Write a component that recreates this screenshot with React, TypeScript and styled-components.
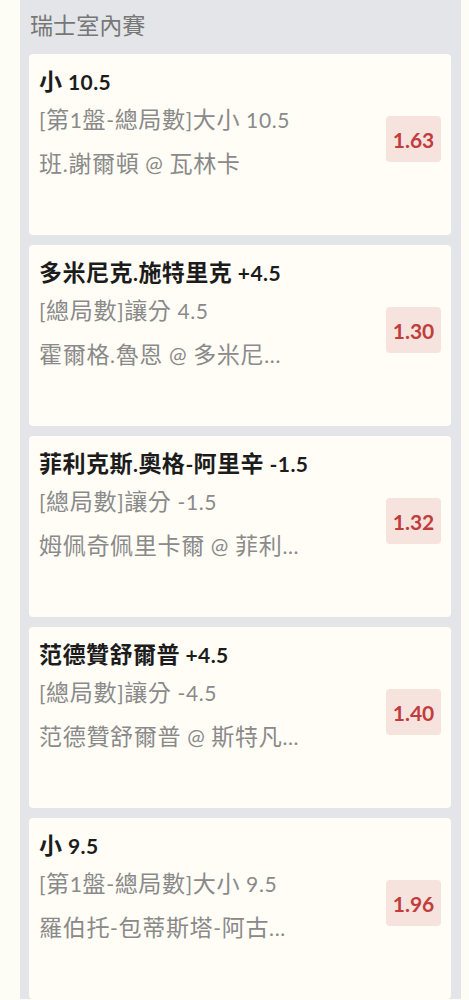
import styled, { createGlobalStyle } from "styled-components";

const GlobalStyle = createGlobalStyle`
  html, body {
    margin: 0;
    padding: 0;
    background: #fdfcf5;
  }
  body {
    font-family: Lato, "Noto Sans CJK TC", sans-serif;
  }
`;

const Panel = styled.section`
  margin: 0 8px 0 20px;
  background: #e4e5e9;
  padding: 0 10px 0 9px;
`;

const Header = styled.div`
  height: 54px;
  line-height: 52px;
  padding-left: 1px;
  font-size: 21px;
  color: #777;
`;

const List = styled.div`
  display: flex;
  flex-direction: column;
  gap: 10px;
`;

const Card = styled.div`
  box-sizing: border-box;
  height: 181px;
  display: flex;
  align-items: center;
  justify-content: space-between;
  padding: 13px 10px 24px 10px;
  background: #fffdf6;
  border-radius: 4px;
`;

const Info = styled.div`
  align-self: flex-start;
  display: flex;
  flex-direction: column;
  min-width: 0;
`;

const Title = styled.div`
  font-size: 21px;
  line-height: 30px;
  font-weight: 700;
  letter-spacing: 0.4px;
  color: #1c1c1c;
  white-space: nowrap;
`;

const Line = styled.div<{ $gap: number }>`
  margin-top: ${(p) => p.$gap}px;
  font-size: 21px;
  line-height: 30px;
  letter-spacing: 0.6px;
  color: #8a8a8a;
  white-space: nowrap;
`;

// Chinese runs are set a little larger than the Latin text around them
const Han = styled.span`
  font-size: 1.1em;
  line-height: 1;
`;

const Odds = styled.div`
  flex-shrink: 0;
  width: 55px;
  height: 46px;
  display: flex;
  align-items: center;
  justify-content: center;
  background: #f6e3dd;
  border-radius: 4px;
  font-size: 21px;
  font-weight: 700;
  color: #c13d3d;
`;

const mixed = (text: string) =>
  text
    .split(/([\u3400-\u9fff]+)/)
    .filter(Boolean)
    .map((part, i) =>
      /[\u3400-\u9fff]/.test(part) ? <Han key={i}>{part}</Han> : part
    );

type Bet = {
  title: string;
  market: string;
  match: string;
  odds: string;
};

const bets: Bet[] = [
  { title: "小 10.5", market: "[第1盤-總局數]大小 10.5", match: "班.謝爾頓 @ 瓦林卡", odds: "1.63" },
  { title: "多米尼克.施特里克 +4.5", market: "[總局數]讓分 4.5", match: "霍爾格.魯恩 @ 多米尼...", odds: "1.30" },
  { title: "菲利克斯.奧格-阿里辛 -1.5", market: "[總局數]讓分 -1.5", match: "姆佩奇佩里卡爾 @ 菲利...", odds: "1.32" },
  { title: "范德贊舒爾普 +4.5", market: "[總局數]讓分 -4.5", match: "范德贊舒爾普 @ 斯特凡...", odds: "1.40" },
  { title: "小 9.5", market: "[第1盤-總局數]大小 9.5", match: "羅伯托-包蒂斯塔-阿古...", odds: "1.96" },
];

export default function App() {
  return (
    <>
      <GlobalStyle />
      <Panel>
        <Header>{mixed("瑞士室內賽")}</Header>
        <List>
          {bets.map((b) => (
            <Card key={b.title}>
              <Info>
                <Title>{mixed(b.title)}</Title>
                <Line $gap={8}>{mixed(b.market)}</Line>
                <Line $gap={14}>{mixed(b.match)}</Line>
              </Info>
              <Odds>{b.odds}</Odds>
            </Card>
          ))}
        </List>
      </Panel>
    </>
  );
}
